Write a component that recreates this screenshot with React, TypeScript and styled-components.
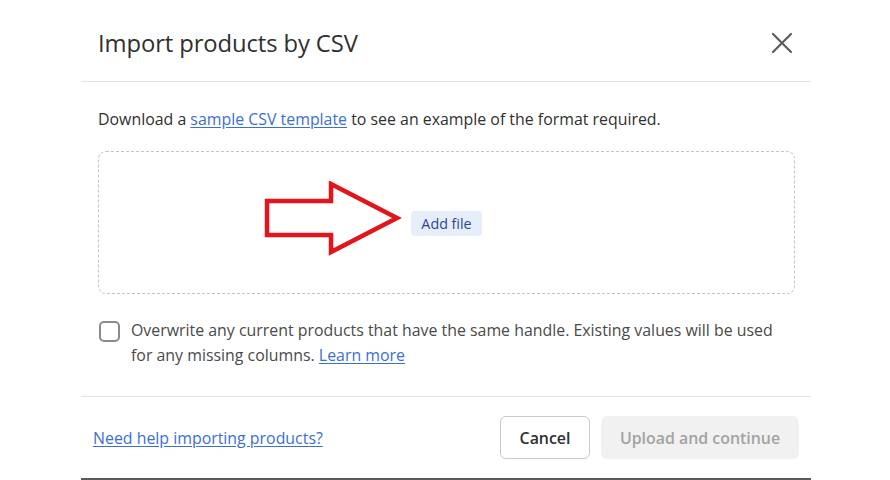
import React, { useState } from 'react'
import styled, { createGlobalStyle } from 'styled-components'

const FONT = '"Open Sans", "Noto Sans", "Liberation Sans", sans-serif'

const GlobalStyle = createGlobalStyle`
  html, body {
    margin: 0;
    padding: 0;
    background: #ffffff;
  }
  body {
    font-family: ${FONT};
    color: #303030;
  }
`

export default function App() {
  const [overwrite, setOverwrite] = useState(false)

  return (
    <>
      <GlobalStyle />
      <Page>
        <Modal>
          <Header>
            <Title>Import products by CSV</Title>
            <CloseBtn aria-label='Close'>
              <svg width='22' height='22' viewBox='0 0 22 22'>
                <path d='M2 2 L20 20 M20 2 L2 20' stroke='#5c5c5c' strokeWidth='2.2' strokeLinecap='round' />
              </svg>
            </CloseBtn>
          </Header>
          <Body>
            <Description>
              Download a <Link href='#'>sample CSV template</Link> to see an example of the format required.
            </Description>
            <DropZone>
              <Arrow width='140' height='80' viewBox='0 0 140 80'>
                <polygon
                  points='4,20 68,20 68,3 134,37 68,71 68,54 4,54'
                  fill='none'
                  stroke='#e3141c'
                  strokeWidth='4.5'
                  strokeLinejoin='miter'
                />
              </Arrow>
              <AddFileBtn>Add file</AddFileBtn>
            </DropZone>
            <CheckRow>
              <CheckBox $checked={overwrite} onClick={() => setOverwrite((v) => !v)} />
              <CheckText>
                Overwrite any current products that have the same handle. Existing values will be used for any
                missing columns. <Link href='#'>Learn more</Link>
              </CheckText>
            </CheckRow>
          </Body>
          <Footer>
            <HelpText>
              <Link href='#'>Need help importing products?</Link>
            </HelpText>
            <Actions>
              <CancelBtn>Cancel</CancelBtn>
              <PrimaryBtn disabled>Upload and continue</PrimaryBtn>
            </Actions>
          </Footer>
        </Modal>
      </Page>
    </>
  )
}

const Page = styled.div`
  width: 890px;
  height: 480px;
  display: flex;
  padding-left: 81px;
  box-sizing: border-box;
`

const Modal = styled.div`
  width: 730px;
  height: 480px;
  display: flex;
  flex-direction: column;
  border-bottom: 2px solid #5a5a5a;
  box-sizing: border-box;
`

const Header = styled.div`
  height: 82px;
  display: flex;
  align-items: center;
  justify-content: space-between;
  padding: 4px 16px 0 17px;
  border-bottom: 1px solid #e3e3e3;
  box-sizing: border-box;
`

const Title = styled.h1`
  margin: 0;
  font-size: 23.8px;
  font-weight: 500;
  color: #303030;
  letter-spacing: -0.1px;
`

const CloseBtn = styled.button`
  width: 26px;
  height: 26px;
  padding: 0;
  border: none;
  background: none;
  display: flex;
  align-items: center;
  justify-content: center;
  cursor: pointer;
`

const Body = styled.div`
  height: 315px;
  padding: 27px 16px 0 17px;
  border-bottom: 1px solid #e3e3e3;
  box-sizing: border-box;
`

const Description = styled.p`
  margin: 0;
  font-size: 15.9px;
  line-height: 20px;
  color: #303030;
`

const Link = styled.a`
  color: #3b6fd4;
  text-decoration: underline;
  text-underline-offset: 2px;
  font-size: inherit;
  line-height: inherit;
`

const HelpText = styled.span`
  font-size: 15.9px;
  line-height: 20px;
`

const DropZone = styled.div`
  position: relative;
  margin-top: 22px;
  height: 143px;
  border: 1px dashed #c4c4c4;
  border-radius: 8px;
  display: flex;
  align-items: center;
  justify-content: center;
  box-sizing: border-box;
`

const Arrow = styled.svg`
  position: absolute;
  left: 164px;
  top: 29px;
`

const AddFileBtn = styled.button`
  font-family: ${FONT};
  font-size: 14.3px;
  font-weight: 500;
  color: #2a4a8c;
  background: #e6edfb;
  border: none;
  border-radius: 4px;
  padding: 3px 10px 3px;
  margin-top: 1px;
  cursor: pointer;
`

const CheckRow = styled.div`
  display: flex;
  align-items: flex-start;
  gap: 11px;
  margin-top: 24px;
  padding-left: 1px;
`

const CheckBox = styled.div<{ $checked: boolean }>`
  flex: none;
  width: 21px;
  height: 21px;
  margin-top: 3px;
  border: 2px solid #8a8a8a;
  border-radius: 5px;
  background: ${(p) => (p.$checked ? '#303030' : '#ffffff')};
  box-sizing: border-box;
  cursor: pointer;
`

const CheckText = styled.p`
  margin: 0;
  max-width: 650px;
  font-size: 15.9px;
  line-height: 25px;
  color: #4a4a4a;
`

const Footer = styled.div`
  flex: 1;
  display: flex;
  align-items: center;
  justify-content: space-between;
  padding: 0 12px;
`

const Actions = styled.div`
  display: flex;
  gap: 11px;
`

const BaseBtn = styled.button`
  font-family: ${FONT};
  font-size: 15.9px;
  font-weight: 600;
  height: 43px;
  border-radius: 6px;
  box-sizing: border-box;
  cursor: pointer;
`

const CancelBtn = styled(BaseBtn)`
  width: 90px;
  background: #ffffff;
  color: #303030;
  border: 1px solid #c9c9c9;
`

const PrimaryBtn = styled(BaseBtn)`
  width: 198px;
  background: #f1f1f1;
  color: #a3a3a3;
  border: none;
  cursor: default;
`
